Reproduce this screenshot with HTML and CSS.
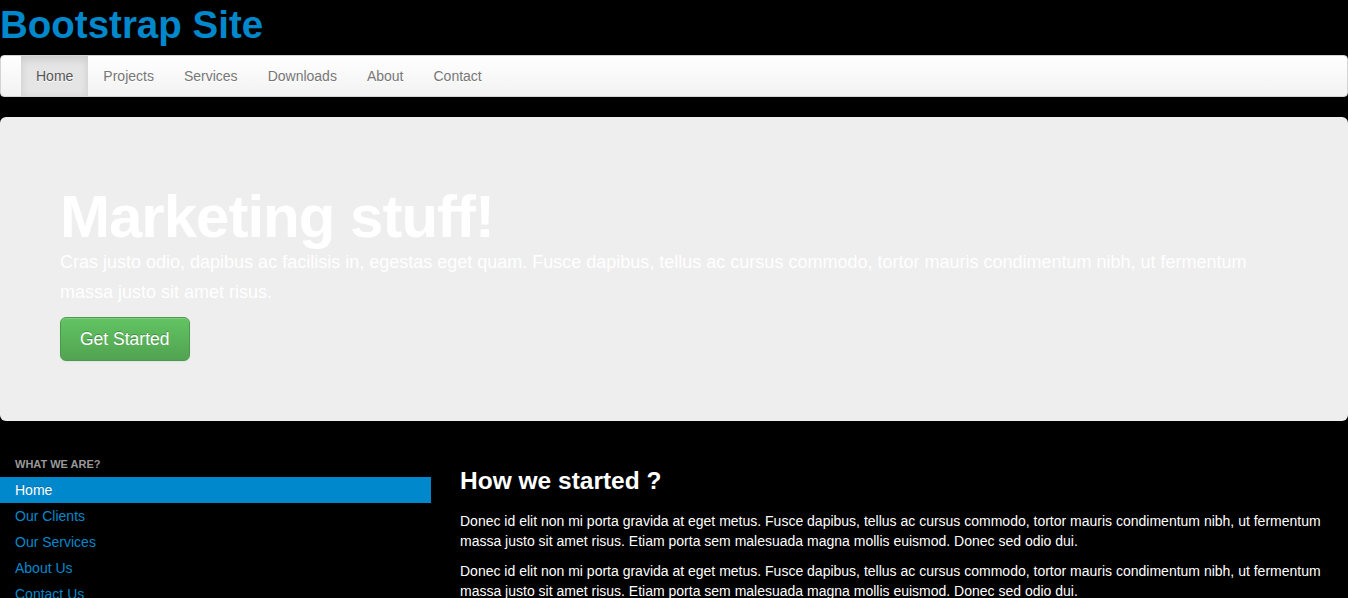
FILE: index.html
```html
<!DOCTYPE html>
<html>
<head>
<meta charset="utf-8">
<title>Bootstrap Site</title>
<link rel="stylesheet" href="styles.css">
</head>
<body>
<h1 class="brand">Bootstrap Site</h1>
<div class="navbar">
  <ul class="nav">
    <li class="active"><a href="#">Home</a></li>
    <li><a href="#">Projects</a></li>
    <li><a href="#">Services</a></li>
    <li><a href="#">Downloads</a></li>
    <li><a href="#">About</a></li>
    <li><a href="#">Contact</a></li>
  </ul>
</div>
<div class="hero">
  <h1 class="hero-title">Marketing stuff!</h1>
  <p class="hero-text">Cras justo odio, dapibus ac facilisis in, egestas eget quam. Fusce dapibus, tellus ac cursus commodo, tortor mauris condimentum nibh, ut fermentum massa justo sit amet risus.</p>
  <a class="btn-success" href="#">Get Started</a>
</div>
<div class="row">
  <div class="sidebar">
    <ul class="nav-list">
      <li class="nav-header">What we are?</li>
      <li class="active"><a href="#">Home</a></li>
      <li><a href="#">Our Clients</a></li>
      <li><a href="#">Our Services</a></li>
      <li><a href="#">About Us</a></li>
      <li><a href="#">Contact Us</a></li>
    </ul>
  </div>
  <div class="main">
    <h3 class="main-title">How we started ?</h3>
    <p>Donec id elit non mi porta gravida at eget metus. Fusce dapibus, tellus ac cursus commodo, tortor mauris condimentum nibh, ut fermentum massa justo sit amet risus. Etiam porta sem malesuada magna mollis euismod. Donec sed odio dui.</p>
    <p>Donec id elit non mi porta gravida at eget metus. Fusce dapibus, tellus ac cursus commodo, tortor mauris condimentum nibh, ut fermentum massa justo sit amet risus. Etiam porta sem malesuada magna mollis euismod. Donec sed odio dui.</p>
  </div>
</div>
</body>
</html>
```
FILE: styles.css
```css
html, body {
  margin: 0;
  padding: 0;
  background: #000;
}
body {
  font-family: "Liberation Sans", Arial, Helvetica, sans-serif;
  font-size: 14px;
  line-height: 20px;
  color: #fff;
}
a { text-decoration: none; }
ul { list-style: none; margin: 0; padding: 0; }

.brand {
  margin: 5px 0 10px;
  font-size: 38.5px;
  line-height: 40px;
  font-weight: bold;
  color: #0088cc;
}

.navbar {
  min-height: 40px;
  padding: 0 20px;
  background: linear-gradient(to bottom, #ffffff, #f2f2f2);
  border: 1px solid #d4d4d4;
  border-radius: 4px;
  box-shadow: 0 1px 4px rgba(0,0,0,0.065);
  margin-bottom: 20px;
}
.nav {
  display: flex;
}
.nav li a {
  display: block;
  padding: 10px 15px;
  color: #777;
  text-shadow: 0 1px 0 #fff;
}
.nav li.active a {
  color: #555;
  background: #e5e5e5;
  box-shadow: inset 0 3px 8px rgba(0,0,0,0.125);
}

.hero {
  padding: 60px;
  background: #eeeeee;
  border-radius: 6px;
  margin-bottom: 30px;
}
.hero-title {
  margin: 10px 0 0;
  font-size: 60px;
  line-height: 60px;
  letter-spacing: -1px;
  font-weight: bold;
  color: #fff;
}
.hero-text {
  margin: 0 0 10px;
  font-size: 18px;
  line-height: 30px;
  color: #fff;
}
.btn-success {
  display: inline-block;
  padding: 11px 19px;
  font-size: 17.5px;
  line-height: 20px;
  color: #fff;
  text-shadow: 0 -1px 0 rgba(0,0,0,0.25);
  background: linear-gradient(to bottom, #62c462, #51a351);
  border: 1px solid #4b9a4b;
  border-radius: 6px;
  box-shadow: inset 0 1px 0 rgba(255,255,255,0.2), 0 1px 2px rgba(0,0,0,0.05);
}

.row {
  display: grid;
  grid-template-columns: 431px 1fr;
  column-gap: 29px;
  padding-right: 20px;
}
.nav-list {
  padding: 0 15px;
}
.nav-list .nav-header {
  padding: 3px 15px 3px 0;
  font-size: 11px;
  font-weight: bold;
  line-height: 20px;
  color: #999;
  text-transform: uppercase;
}
.nav-list li a {
  display: block;
  margin: 0 -15px;
  padding: 3px 15px;
  color: #0088cc;
}
.nav-list li.active a {
  background: #0088cc;
  color: #fff;
  text-shadow: 0 -1px 0 rgba(0,0,0,0.2);
}

.main-title {
  margin: 10px 0;
  font-size: 24.5px;
  line-height: 40px;
  font-weight: bold;
  color: #fff;
}
.main p {
  margin: 0 0 10px;
}
```
